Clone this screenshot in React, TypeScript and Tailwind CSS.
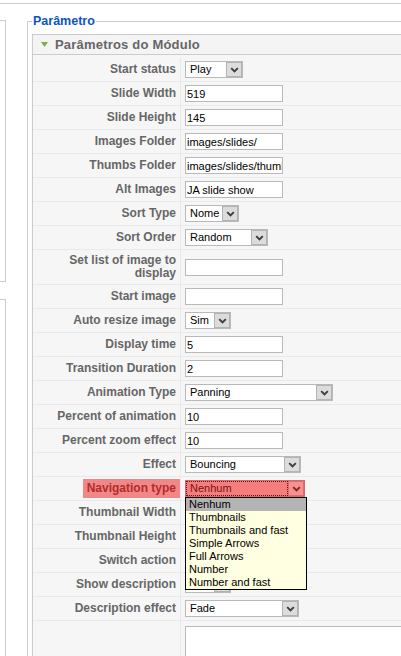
import React from 'react';

type Field =
  | { kind: 'text'; value: string }
  | { kind: 'select'; value: string; w: string }
  | { kind: 'nav' };

type Row = { label: string; field: Field; tall?: boolean };

// values hidden behind the open dropdown are left empty
const rows: Row[] = [
  { label: 'Start status', field: { kind: 'select', value: 'Play', w: 'w-[58px]' } },
  { label: 'Slide Width', field: { kind: 'text', value: '519' } },
  { label: 'Slide Height', field: { kind: 'text', value: '145' } },
  { label: 'Images Folder', field: { kind: 'text', value: 'images/slides/' } },
  { label: 'Thumbs Folder', field: { kind: 'text', value: 'images/slides/thumbs/' } },
  { label: 'Alt Images', field: { kind: 'text', value: 'JA slide show' } },
  { label: 'Sort Type', field: { kind: 'select', value: 'Nome', w: 'w-[54px]' } },
  { label: 'Sort Order', field: { kind: 'select', value: 'Random', w: 'w-[83px]' } },
  { label: 'Set list of image to display', field: { kind: 'text', value: '' }, tall: true },
  { label: 'Start image', field: { kind: 'text', value: '' } },
  { label: 'Auto resize image', field: { kind: 'select', value: 'Sim', w: 'w-[46px]' } },
  { label: 'Display time', field: { kind: 'text', value: '5' } },
  { label: 'Transition Duration', field: { kind: 'text', value: '2' } },
  { label: 'Animation Type', field: { kind: 'select', value: 'Panning', w: 'w-[148px]' } },
  { label: 'Percent of animation', field: { kind: 'text', value: '10' } },
  { label: 'Percent zoom effect', field: { kind: 'text', value: '10' } },
  { label: 'Effect', field: { kind: 'select', value: 'Bouncing', w: 'w-[116px]' } },
  { label: 'Navigation type', field: { kind: 'nav' } },
  { label: 'Thumbnail Width', field: { kind: 'text', value: '' } },
  { label: 'Thumbnail Height', field: { kind: 'text', value: '' } },
  { label: 'Switch action', field: { kind: 'select', value: '', w: 'w-[70px]' } },
  { label: 'Show description', field: { kind: 'select', value: '', w: 'w-[46px]' } },
  { label: 'Description effect', field: { kind: 'select', value: 'Fade', w: 'w-[114px]' } },
];

const navOptions = [
  'Nenhum',
  'Thumbnails',
  'Thumbnails and fast',
  'Simple Arrows',
  'Full Arrows',
  'Number',
  'Number and fast',
];

const Chevron = ({ color = '#3c3c3c' }: { color?: string }) => (
  <svg width="9" height="6" viewBox="0 0 9 6">
    <path d="M1.2 1.2 L4.5 4.5 L7.8 1.2" fill="none" stroke={color} strokeWidth="1.9" />
  </svg>
);

const TextInput = ({ value }: { value: string }) => (
  <input
    readOnly
    defaultValue={value}
    className="h-[17px] w-[98px] border border-[#b9b9b9] bg-white pl-[1px] text-[11px] text-black outline-none"
  />
);

const Select = ({ value, w }: { value: string; w: string }) => (
  <div className={`flex h-[17px] items-stretch border border-[#b9b9b9] bg-white ${w}`}>
    <span className="flex-1 overflow-hidden whitespace-nowrap pl-[4px] text-[11px] leading-[15px] text-black">
      {value}
    </span>
    <span className="flex w-[16px] items-center justify-center border border-[#b3b3b3] bg-[#dcdcdc]">
      <Chevron />
    </span>
  </div>
);

const NavSelect = () => (
  <div className="relative">
    <div className="flex h-[17px] w-[120px] items-stretch border border-[#d46a6a] bg-[#f47d7d]">
      <span className="flex-1 border border-dotted border-[#6b1010] pl-[3px] text-[11px] leading-[13px] text-[#7a1414]">
        Nenhum
      </span>
      <span className="flex w-[16px] items-center justify-center border border-[#e06b6b] bg-[#f29292]">
        <Chevron color="#8c2020" />
      </span>
    </div>
    <ul className="absolute left-0 top-full z-10 w-[122px] border border-black bg-[#ffffe1]">
      {navOptions.map((o, i) => (
        <li
          key={o}
          className={`h-[13px] whitespace-nowrap pl-[3px] text-[11px] leading-[13px] text-black ${
            i === 0 ? 'bg-[#b4b4b4]' : ''
          }`}
        >
          {o}
        </li>
      ))}
    </ul>
  </div>
);

export default function App() {
  return (
    <div className="h-[656px] w-[401px] overflow-hidden bg-white font-['Liberation_Sans',Arial,sans-serif]">
      <div className="h-[4px] border-b border-[#cccccc]" />
      <div className="flex">
        {/* left column boxes */}
        <div className="w-[6px] shrink-0 pt-[16px]">
          <div className="h-[262px] border-y border-r border-[#cccccc]" />
          <div className="mt-[17px] h-[400px] border-t border-r border-[#cccccc]" />
        </div>

        <fieldset className="ml-[21px] mt-[9px] w-[400px] shrink-0 border-l border-t border-[#cccccc] pl-[4px] pt-[4px]">
          <legend className="px-[1px] text-[12.5px] font-bold leading-[17px] text-[#0b55c4]">Parâmetro</legend>

          <div className="border border-[#cccccc] bg-[#f6f6f6]">
            <div className="flex h-[20px] items-center gap-[7px] border-b border-[#cccccc] bg-[#f4f4f4] pl-[8px]">
              <svg width="7" height="5" viewBox="0 0 7 5">
                <polygon points="0,0 7,0 3.5,5" fill="#7fb04a" />
              </svg>
              <span className="text-[13px] font-bold tracking-[0.2px] text-[#666666]">Parâmetros do Módulo</span>
            </div>

            <div className="pt-[3px]">
              {rows.map((r) => (
                <div
                  key={r.label}
                  className={`flex border-b border-[#e9e9e9] ${r.tall ? 'h-[35px]' : 'h-[24px]'}`}
                >
                  <div
                    className={`flex w-[148px] shrink-0 items-center justify-end border-r border-[#e9e9e9] text-right text-[12px] font-bold leading-[13px] text-[#666666] ${
                      r.field.kind === 'nav' ? '' : 'pr-[4px]'
                    }`}
                  >
                    {r.field.kind === 'nav' ? (
                      <span className="h-[19px] bg-[#f28787] pl-[4px] pr-[4px] leading-[19px] text-[#b22c2c]">
                        {r.label}
                      </span>
                    ) : r.tall ? (
                      <span>
                        Set list of image to
                        <br />
                        display
                      </span>
                    ) : (
                      r.label
                    )}
                  </div>
                  <div className="flex items-center pl-[4px]">
                    {r.field.kind === 'text' && <TextInput value={r.field.value} />}
                    {r.field.kind === 'select' && <Select value={r.field.value} w={r.field.w} />}
                    {r.field.kind === 'nav' && <NavSelect />}
                  </div>
                </div>
              ))}

              <div className="flex h-[60px]">
                <div className="w-[148px] shrink-0 border-r border-[#e9e9e9]" />
                <div className="pl-[4px] pt-[5px]">
                  <textarea readOnly className="h-[60px] w-[240px] resize-none border border-[#b9b9b9] bg-white" />
                </div>
              </div>
            </div>
          </div>
        </fieldset>
      </div>
    </div>
  );
}
